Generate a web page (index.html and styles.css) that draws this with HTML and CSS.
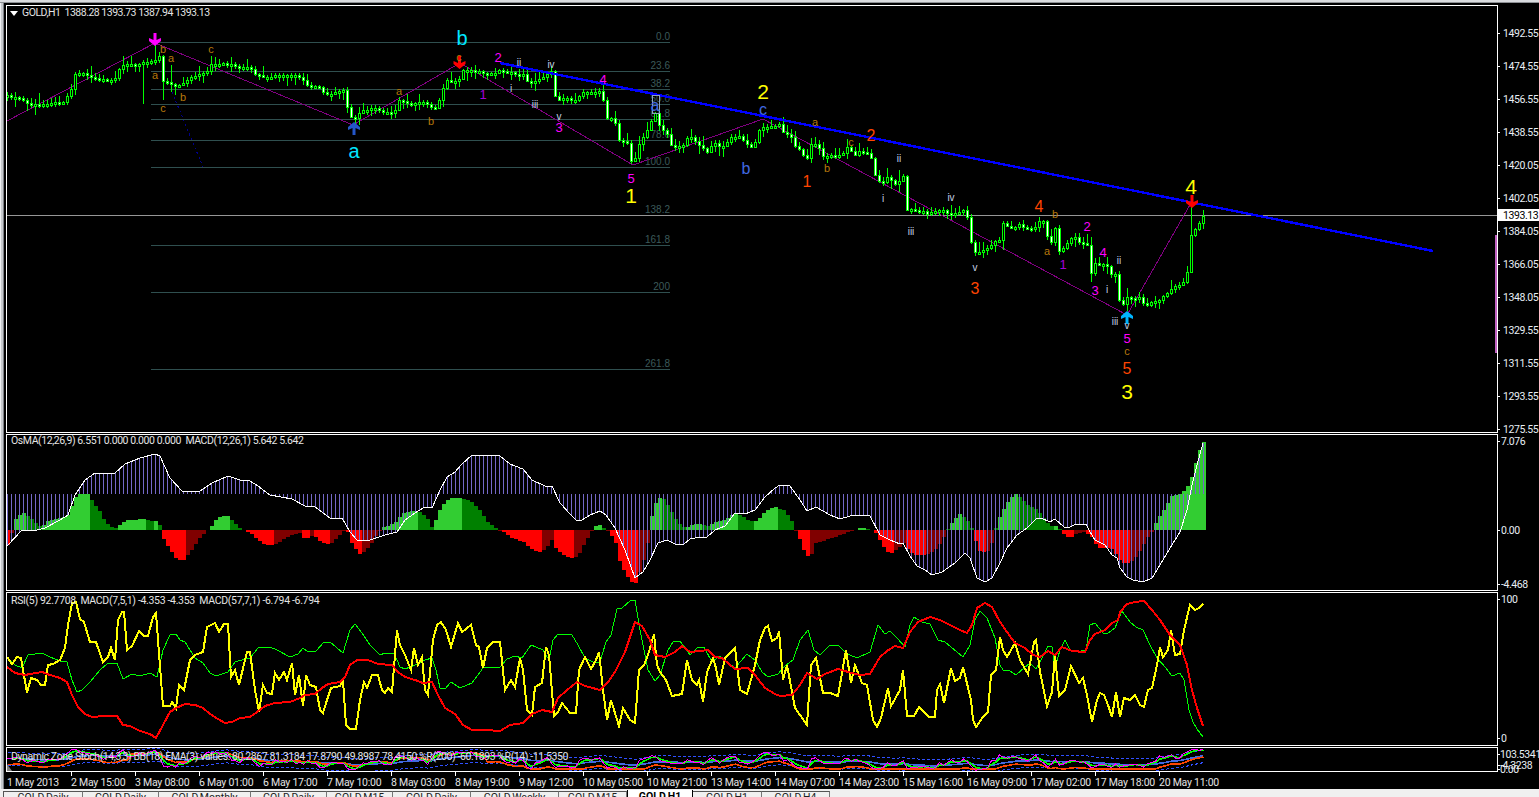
FILE: index.html
```html
<!DOCTYPE html>
<html lang="en">
<head>
    <meta charset="UTF-8">
    <title>GOLD,H1</title>
    <link rel="stylesheet" href="styles.css">
</head>
<body>

<div class="terminal">
    <div class="top-strip"></div>

    <div class="workspace">
        <div class="left-frame"></div>

        <div class="chart-window">
            <!-- Price chart -->
            <div class="pane pane-main">
                <div class="plot" id="plotMain">
                    <div class="legend legend-main"><i class="legend-arrow"></i>GOLD,H1&nbsp; 1388.28 1393.73 1387.94 1393.13</div>
                </div>
                <div class="scale" id="scaleMain"></div>
            </div>

            <!-- OsMA / MACD -->
            <div class="pane pane-osma">
                <div class="plot" id="plotOsma">
                    <div class="legend legend-osma">OsMA(12,26,9) 6.551 0.000 0.000 0.000&nbsp; MACD(12,26,1) 5.642 5.642</div>
                </div>
                <div class="scale" id="scaleOsma"></div>
            </div>

            <!-- RSI / two MACDs -->
            <div class="pane pane-rsi">
                <div class="plot" id="plotRsi">
                    <div class="legend legend-rsi">RSI(5) 92.7708&nbsp; MACD(7,5,1) -4.353 -4.353&nbsp; MACD(57,7,1) -6.794 -6.794</div>
                </div>
                <div class="scale" id="scaleRsi"></div>
            </div>

            <!-- Dynamic zone stochastic -->
            <div class="pane pane-stoch">
                <div class="plot" id="plotStoch">
                    <div class="legend legend-stoch">Dynamic Zone Stoch(14,3,3) BB(18) EMA(3) values: 80.2867 81.3184 17.8790 49.8987 78.4150 %R(200) -60.1893 %R(14) -11.5350</div>
                </div>
                <div class="scale" id="scaleStoch"></div>
            </div>

            <!-- Time axis -->
            <div class="time-axis">
                <span>1 May 2013</span>
                <span>2 May 15:00</span>
                <span>3 May 08:00</span>
                <span>6 May 01:00</span>
                <span>6 May 17:00</span>
                <span>7 May 10:00</span>
                <span>8 May 03:00</span>
                <span>8 May 19:00</span>
                <span>9 May 12:00</span>
                <span>10 May 05:00</span>
                <span>10 May 21:00</span>
                <span>13 May 14:00</span>
                <span>14 May 07:00</span>
                <span>14 May 23:00</span>
                <span>15 May 16:00</span>
                <span>16 May 09:00</span>
                <span>17 May 02:00</span>
                <span>17 May 18:00</span>
                <span>20 May 11:00</span>
            </div>
        </div>
    </div>

    <div class="tabs">
        <div class="tab">GOLD,Daily</div>
        <div class="tab">GOLD,Daily</div>
        <div class="tab">GOLD,Monthly</div>
        <div class="tab">GOLD,Daily</div>
        <div class="tab">GOLD,M15</div>
        <div class="tab">GOLD,Daily</div>
        <div class="tab">GOLD,Weekly</div>
        <div class="tab">GOLD,M15</div>
        <div class="tab active">GOLD,H1</div>
        <div class="tab">GOLD,H1</div>
        <div class="tab">GOLD,H4</div>
    </div>
</div>

<script src="chart.js"></script>
</body>
</html>
```

FILE: styles.css
```css
* {
    box-sizing: border-box;
}

body {
    margin: 0;
    padding: 0;
    background-color: #000;
    overflow: hidden;
    font-family: Roboto, "Liberation Sans", sans-serif;
}

.terminal {
    display: flex;
    flex-direction: column;
    height: 797px;
    width: 1539px;
    overflow: hidden;
    background-color: #000;
}

.top-strip {
    height: 3px;
    flex: none;
    background-color: #d9dbde;
    border-bottom: 1px solid #8d9094;
}

.workspace {
    display: flex;
    flex: 1;
    min-height: 0;
    padding-top: 2px;
}

.left-frame {
    width: 6px;
    flex: none;
    margin-top: -2px;
    background-color: #c4c7cb;
    border-left: 1px solid #eceef0;
    border-right: 2px solid #000;
    box-shadow: inset -1px 0 0 #7c7f84;
}

.chart-window {
    display: flex;
    flex-direction: column;
    flex: 1;
    gap: 1px;
}

/* Panes */
.pane {
    display: flex;
    flex: none;
}

.pane-main { height: 428px; }
.pane-osma { height: 157px; }
.pane-rsi { height: 154px; }
.pane-stoch { height: 25px; }

.plot {
    position: relative;
    width: 1492px;
    flex: none;
    overflow: hidden;
    border: 1px solid #fff;
}

.scale {
    flex: 1;
}

.plot svg, .scale svg {
    display: block;
    width: 100%;
    height: 100%;
}

.scale svg {
    overflow: visible;
}

.legend {
    position: absolute;
    line-height: 12px;
    font-size: 10.5px;
    letter-spacing: -0.42px;
    color: #e4e4e4;
    white-space: nowrap;
}

.legend-main { top: 1px; left: 15px; letter-spacing: -0.5px; }
.legend-osma { top: 0; left: 4px; }
.legend-rsi { top: 2px; left: 4px; letter-spacing: -0.33px; }
.legend-stoch { top: 3px; left: 4px; }

.legend-arrow {
    position: absolute;
    left: -12px;
    top: 4px;
    border-left: 4px solid transparent;
    border-right: 4px solid transparent;
    border-top: 5px solid #fff;
}

/* Time axis */
.time-axis {
    display: grid;
    grid-template-columns: repeat(19, 64px);
    flex: none;
    height: 16px;
    margin-top: -1px;
    padding-left: 1px;
    font-size: 10.5px;
    letter-spacing: -0.25px;
    color: #e4e4e4;
}

.time-axis span {
    position: relative;
    padding-top: 4px;
    white-space: nowrap;
}

.time-axis span::before {
    content: "";
    position: absolute;
    left: 0;
    top: 0;
    width: 1px;
    height: 4px;
    background-color: #fff;
}

.time-axis span:first-child::before {
    display: none;
}

/* Tabs, cut off by the bottom of the window */
.tabs {
    display: grid;
    grid-template-columns: 80px 76px 92px 76px 66px 78px 88px 68px 66px 69px 68px;
    flex: none;
    height: 8px;
    padding-left: 3px;
    padding-top: 2px;
    overflow: hidden;
    background-color: #f0f0f0;
}

.tab {
    height: 20px;
    padding-top: 0;
    line-height: 12px;
    text-align: center;
    font-size: 10.5px;
    color: #222;
    white-space: nowrap;
    border-top: 1px solid #555;
    border-right: 1px solid #777;
}

.tab:first-child {
    border-left: 1px solid #555;
}

.tab.active {
    margin-top: -1px;
    padding-top: 1px;
    background-color: #fff;
    font-weight: bold;
    color: #000;
    border-top: none;
    border-left: 1px solid #000;
    border-right: 1px solid #000;
}

/* Chart drawing */
.crisp {
    shape-rendering: crispEdges;
    fill: none;
}

.scale-text {
    font-family: Roboto, "Liberation Sans", sans-serif;
    font-size: 10.5px;
    letter-spacing: -0.4px;
    fill: #e8eef5;
    dominant-baseline: central;
}

.scale-text.tag {
    fill: #000;
}

.fib-text {
    font-family: "Liberation Sans", sans-serif;
    font-size: 10px;
    fill: #3c5a5a;
    text-anchor: end;
}

.wave {
    font-family: "Liberation Sans", sans-serif;
    text-anchor: middle;
    dominant-baseline: central;
}

.wave-major { font-size: 21px; fill: #ffff00; }
.wave-abc { font-size: 20px; fill: #00e6ff; }
.wave-intermediate { font-size: 16px; fill: #ff4500; }
.wave-blue { font-size: 16px; fill: #4169e1; }
.wave-minor { font-size: 13px; fill: #ff00ff; }
.wave-minor-dim { font-size: 13px; fill: #a400d8; }
.wave-sub { font-size: 11px; fill: #b8780b; }
.wave-roman { font-size: 10px; fill: #c4d2e6; }
```

FILE: chart.js
```js
// Everything below is in page pixels, the svg viewBox is set to the box of its container
const BAR_COUNT = 300;

function barX(i) {
    return 7.5 + 4 * i;
}

function rnd(i) {
    const v = Math.sin(i * 12.9898) * 43758.5453;
    return v - Math.floor(v);
}

// keys is a flat list: x, y, x, y ...
function lerp(keys, x) {
    if (x <= keys[0]) return keys[1];
    for (let k = 2; k < keys.length; k += 2) {
        if (x <= keys[k]) {
            const t = (x - keys[k - 2]) / (keys[k] - keys[k - 2]);
            return keys[k - 1] + t * (keys[k + 1] - keys[k - 1]);
        }
    }
    return keys[keys.length - 1];
}

function sample(keys) {
    const out = [];
    for (let i = 0; i < BAR_COUNT; i++) out.push(lerp(keys, barX(i)));
    return out;
}

function polyline(points, color, width, extra) {
    const p = points.join(' ');
    return `<polyline class="crisp" points="${p}" stroke="${color}" stroke-width="${width}" ${extra || ''}/>`;
}

function keysToPoints(keys) {
    const pts = [];
    for (let k = 0; k < keys.length; k += 2) pts.push(keys[k] + ',' + keys[k + 1]);
    return pts;
}

function mount(id, content) {
    const box = document.getElementById(id);
    const r = box.getBoundingClientRect();
    const left = r.left + box.clientLeft;
    const top = r.top + box.clientTop;
    const svg = `<svg viewBox="${left} ${top} ${box.clientWidth} ${box.clientHeight}">${content}</svg>`;
    box.insertAdjacentHTML('afterbegin', svg);
}

function scaleLabels(list, textX) {
    let s = '';
    list.forEach(function(item) {
        s += `<rect x="1498" y="${item[0]}" width="2" height="1" fill="#fff"/>`;
        s += `<text class="scale-text" x="${textX}" y="${item[0]}">${item[1]}</text>`;
    });
    return s;
}

/* ---------- price chart ---------- */
const closeKeys = [8,96,20,98,28,103,40,105,50,103,65,101,72,87,76,72,82,73,90,76,100,80,115,80,120,68,127,63,135,65,145,62,155,60,159,53,163,80,168,82,175,85,180,85,190,78,207,72,212,64,230,63,237,68,250,68,257,75,265,78,280,75,295,75,303,80,310,88,318,85,322,92,330,95,344,90,348,110,352,118,356,118,362,110,375,108,385,112,395,112,400,100,410,104,425,102,430,105,434,110,438,105,442,90,447,80,455,82,460,80,463,70,470,70,480,71,487,74,500,71,510,72,515,74,525,75,528,82,540,80,548,73,553,71,556,100,565,98,575,100,580,95,585,92,600,91,603,98,607,117,615,120,616,127,619,140,628,142,632,163,637,156,640,142,645,135,650,123,656,113,660,127,668,135,672,146,683,146,690,135,700,145,707,152,715,143,723,147,730,138,740,135,745,143,752,147,757,140,760,128,765,127,780,125,785,134,790,134,795,145,800,150,807,160,812,143,818,145,823,155,830,156,843,154,848,147,855,155,860,150,870,154,873,161,876,178,885,183,888,175,895,185,900,180,904,176,907,210,915,210,922,210,927,214,935,211,945,210,950,215,965,210,968,218,972,245,976,253,980,252,985,250,990,247,995,240,1000,240,1003,222,1010,228,1015,227,1020,225,1028,227,1030,229,1035,228,1038,222,1043,220,1047,233,1048,238,1052,243,1056,226,1059,250,1063,248,1068,243,1072,238,1076,237,1080,242,1084,243,1088,246,1091,275,1096,262,1100,265,1104,264,1108,266,1111,274,1115,275,1117,270,1120,306,1123,305,1127,297,1131,298,1135,300,1139,297,1143,303,1147,305,1151,302,1160,300,1167,293,1175,285,1181,285,1187,277,1189,260,1192,229,1195,231,1199,224,1203,215];

const longWicks = { 155: [44, 60], 163: [65, 100], 171: [65, 92], 143: [93, 104], 899: [170, 192], 1191: [200, 262], 1127: [288, 311] };

function drawCandles() {
    const closes = sample(closeKeys);
    let s = '';
    let prev = closes[0];
    closes.forEach(function(raw, i) {
        const close = Math.round(raw + (rnd(i) - 0.5) * 1.6);
        const open = Math.round(prev);
        const top = Math.min(open, close);
        const h = Math.max(Math.abs(open - close), 2);
        const bottom = top + h;
        let hi = top - 1 - Math.round(rnd(i + 500) * rnd(i + 900) * 10);
        let lo = bottom + 1 + Math.round(rnd(i + 1300) * rnd(i + 1700) * 10);
        const x = barX(i);
        Object.keys(longWicks).forEach(function(k) {
            if (Math.abs(k - x) <= 2) {
                hi = Math.min(hi, longWicks[k][0]);
                lo = Math.max(lo, longWicks[k][1]);
            }
        });
        s += `<line class="crisp" x1="${x}" x2="${x}" y1="${hi}" y2="${lo}" stroke="#00ff00"/>`;
        const fill = close > open ? '#fff' : '#000';
        s += `<rect class="crisp" style="fill:${fill}" x="${x - 1}" y="${top + 0.5}" width="2" height="${h}" stroke="#00ff00"/>`;
        prev = close;
    });
    return s;
}

function arrow(x, y, color, up) {
    const flip = up ? -1 : 1;
    const d = 'M-1.5 -12H1.5V-5L6 -7V-4L0 1L-6 -4V-7L-1.5 -5Z';
    return `<path d="${d}" fill="${color}" transform="translate(${x} ${y}) scale(1 ${flip})"/>`;
}

function drawMain() {
    const fib = [[42, '0.0'], [71, '23.6'], [89, '38.2'], [104, '50.0'], [119, '61.8'], [140, '78.6'], [167, '100.0'], [215, '138.2'], [245, '161.8'], [292, '200'], [369, '261.8']];
    let s = '';
    fib.forEach(function(f) {
        s += `<line class="crisp" x1="151" x2="670" y1="${f[0] + 0.5}" y2="${f[0] + 0.5}" stroke="#2f4f4f"/>`;
        s += `<text class="fib-text" x="670" y="${f[0] - 2}">${f[1]}</text>`;
    });

    s += `<line class="crisp" x1="7" x2="1497" y1="215.5" y2="215.5" stroke="#969696"/>`;
    s += polyline(['7,121', '155,43', '353,125', '460,63', '633,165', '763,119', '1127,315', '1191,203'], '#800080', 1);
    s += polyline(['172,92', '203,167'], '#00008b', 1, 'stroke-dasharray="2 3"');
    s += drawCandles();
    s += polyline(['500,63', '1433,251'], '#0000ff', 2.4);
    s += `<rect class="crisp" x="652.5" y="95.5" width="7" height="18" stroke="#8fa3c0"/>`;
    s += `<rect x="1495" y="235" width="2" height="118" fill="#c060c0"/>`;

    s += arrow(155, 45, '#ff00ff', false);
    s += arrow(459.5, 68, '#ff0000', false);
    s += arrow(354, 123, '#2456c8', true);
    s += arrow(1127, 312, '#00b4ff', true);
    s += arrow(1192, 207, '#ff0000', false);

    const waves = [
        ['major', 763, 91, '2'], ['major', 631, 195, '1'], ['major', 1191, 186, '4'], ['major', 1127, 391, '3'],
        ['abc', 462, 38, 'b'], ['abc', 354, 151, 'a'],
        ['intermediate', 807, 181, '1'], ['intermediate', 871, 135, '2'], ['intermediate', 975, 288, '3'], ['intermediate', 1039, 206, '4'], ['intermediate', 1127, 368, '5'],
        ['blue', 746, 168, 'b'], ['blue', 763, 109, 'c'], ['blue', 655, 105, 'a'],
        ['minor', 498, 57, '2'], ['minor', 559, 127, '3'], ['minor', 603, 79, '4'], ['minor', 631, 178, '5'], ['minor', 1087, 226, '2'], ['minor', 1103, 252, '4'], ['minor', 1095, 290, '3'], ['minor', 1127, 338, '5'],
        ['minor-dim', 483, 94, '1'], ['minor-dim', 1063, 264, '1'],
        ['sub', 163, 49, 'b'], ['sub', 155, 75, 'a'], ['sub', 163, 108, 'c'], ['sub', 171, 58, 'a'], ['sub', 183, 97, 'b'], ['sub', 211, 49, 'c'], ['sub', 399, 91, 'a'], ['sub', 431, 121, 'b'], ['sub', 459, 57, 'c'], ['sub', 815, 122, 'a'], ['sub', 827, 168, 'b'], ['sub', 851, 142, 'c'], ['sub', 1047, 251, 'a'], ['sub', 1055, 214, 'b'], ['sub', 1127, 351, 'c'],
        ['roman', 519, 62, 'ii'], ['roman', 551, 64, 'iv'], ['roman', 511, 88, 'i'], ['roman', 535, 104, 'iii'], ['roman', 559, 116, 'v'], ['roman', 899, 158, 'ii'], ['roman', 951, 197, 'iv'], ['roman', 883, 198, 'i'], ['roman', 911, 231, 'iii'], ['roman', 975, 267, 'v'], ['roman', 1119, 260, 'ii'], ['roman', 1107, 289, 'i'], ['roman', 1115, 321, 'iii'], ['roman', 1127, 325, 'v']
    ];
    waves.forEach(function(w) {
        s += `<text class="wave wave-${w[0]}" x="${w[1]}" y="${w[2]}">${w[3]}</text>`;
    });
    mount('plotMain', s);

    const prices = ['1492.55', '1474.55', '1456.55', '1438.55', '1420.05', '1402.05', '1384.05', '1366.05', '1348.05', '1329.55', '1311.55', '1293.55', '1275.55'];
    let scale = scaleLabels(prices.map(function(p, i) { return [33 + 33 * i, p]; }), 1503);
    scale += `<rect x="1498" y="209" width="41" height="12" fill="#fff"/>`;
    scale += `<text class="scale-text tag" x="1503" y="215">1393.13</text>`;
    mount('scaleMain', scale);
}

/* ---------- OsMA ---------- */
const macdKeys = [7,546,22,530,37,530,45,528,60,520,68,515,75,495,85,480,95,473,115,473,125,464,140,458,155,454,160,456,170,478,183,492,200,491,212,483,228,476,240,480,250,481,258,486,270,495,292,499,305,506,315,507,330,518,342,518,350,532,357,540,370,540,385,535,397,532,405,520,418,511,425,507,432,508,440,490,447,477,455,472,462,464,472,455,482,455,500,456,510,464,523,469,532,480,545,486,552,486,560,503,570,514,576,520,582,520,590,515,600,511,606,515,615,528,625,550,635,578,643,572,650,560,658,543,667,540,675,544,683,545,690,539,700,537,707,537,715,530,725,526,735,513,745,514,755,510,765,497,775,488,780,485,790,486,800,500,807,511,816,507,830,515,840,519,850,516,860,515,870,516,880,535,890,540,900,544,903,543,910,556,917,566,925,570,932,575,942,572,955,563,965,553,970,558,977,578,985,582,992,578,1000,563,1007,548,1017,535,1027,528,1036,519,1041,518,1050,522,1055,519,1064,527,1070,527,1076,524,1086,524,1090,532,1095,540,1105,545,1112,555,1117,558,1120,568,1127,577,1133,580,1143,582,1152,578,1160,565,1170,548,1180,532,1187,510,1192,485,1197,465,1203,443];

const histKeys = [7,546,10,540,12,530,14,520,22,512,30,518,37,524,42,527,45,522,60,518,68,515,72,505,77,494,88,494,95,505,100,512,105,522,112,527,117,529,120,524,128,520,145,519,150,521,155,520,160,525,161,530,162,536,170,550,175,558,183,561,190,552,198,540,205,532,207,530,210,528,218,517,228,516,235,523,240,529,243,530,250,533,256,538,262,543,270,546,278,543,290,535,300,533,303,538,308,538,310,536,316,537,322,543,330,544,338,536,345,530,347,530,350,541,355,548,360,555,368,548,375,537,380,530,383,527,395,523,400,516,405,512,415,511,422,513,428,520,433,530,436,518,442,505,450,498,460,498,470,500,480,510,488,523,495,527,498,530,505,533,512,538,520,541,525,543,530,548,535,551,540,552,545,549,550,542,552,539,554,546,560,553,565,556,572,558,577,557,581,550,586,540,590,534,592,530,594,527,597,524,602,525,605,530,607,530,610,534,615,541,618,550,620,564,625,572,630,582,636,583,640,570,645,556,648,540,649,530,650,522,654,505,660,497,665,500,670,510,675,518,680,525,685,528,690,525,700,524,705,526,710,525,715,522,725,520,735,513,740,515,745,518,750,521,755,521,760,518,765,511,775,507,785,511,790,518,793,523,795,530,798,535,802,545,806,557,812,554,815,543,820,542,825,540,835,537,845,533,853,531,860,528,870,529,873,530,877,535,882,544,886,552,892,553,900,547,903,542,908,550,915,555,925,555,935,550,942,540,945,533,948,528,955,518,960,513,967,520,972,529,973,530,975,540,980,552,988,551,993,540,995,530,997,522,1003,510,1010,498,1015,494,1020,497,1027,505,1037,510,1045,520,1050,526,1057,526,1060,530,1062,532,1066,536,1070,538,1075,534,1085,532,1090,535,1095,543,1100,549,1110,547,1116,555,1122,563,1130,563,1137,555,1143,545,1150,533,1153,530,1155,524,1160,515,1165,508,1172,495,1178,495,1185,490,1190,482,1195,465,1197,455,1200,449,1203,442];

function drawOsma() {
    const zero = 530;
    const baseline = 494;
    const hist = sample(histKeys).map(Math.round);
    const macd = sample(macdKeys);
    let s = '';
    hist.forEach(function(y, i) {
        if (y === zero) return;
        const grows = Math.abs(y - zero) >= Math.abs((i ? hist[i - 1] : zero) - zero);
        let color;
        if (y < zero) color = grows ? '#32cd32' : '#008000';
        else color = grows ? '#ff0000' : '#800000';
        s += `<rect class="crisp" style="fill:${color}" x="${barX(i) - 2}" y="${Math.min(y, zero)}" width="4" height="${Math.abs(y - zero)}"/>`;
    });
    macd.forEach(function(y, i) {
        s += `<line class="crisp" x1="${barX(i)}" x2="${barX(i)}" y1="${baseline}" y2="${Math.round(y)}" stroke="#7468c8"/>`;
    });
    s += polyline(keysToPoints(macdKeys), '#fff', 1);
    mount('plotOsma', s);
    mount('scaleOsma', scaleLabels([[441, '7.076'], [530, '0.00'], [584, '-4.468']], 1501));
}

/* ---------- RSI ---------- */
const yellowKeys = [7,657,12,664,17,657,21,658,27,693,31,678,37,680,41,685,45,685,48,665,53,664,60,660,65,648,68,625,72,603,76,602,80,619,84,622,90,642,96,642,103,662,108,657,111,648,115,660,118,620,122,612,124,612,127,650,132,646,139,631,144,636,148,636,153,617,156,613,158,640,163,706,170,706,172,702,176,708,179,685,184,690,190,660,195,655,203,652,207,627,215,623,219,632,224,624,228,624,231,677,235,670,239,685,247,652,250,652,255,690,259,712,263,685,267,693,272,694,275,673,279,680,284,672,287,680,290,670,292,663,295,695,299,675,303,706,306,675,310,685,316,687,320,710,323,713,327,700,331,688,340,686,343,680,346,725,350,729,356,729,360,700,364,682,367,688,372,675,378,675,382,690,385,693,388,688,392,692,397,630,400,645,405,655,411,670,414,648,418,665,422,657,425,690,428,695,433,640,437,625,441,622,446,630,451,647,458,623,462,632,471,625,476,645,479,647,483,668,487,648,493,642,500,642,505,690,511,680,515,687,520,658,523,670,527,710,532,715,535,687,542,683,546,647,549,655,554,716,558,712,562,703,570,713,576,713,579,670,585,657,591,669,596,660,599,652,603,690,607,720,611,700,619,726,623,708,630,720,635,723,639,670,644,665,648,655,654,634,657,665,660,672,666,680,672,696,682,694,687,660,692,680,697,685,699,680,703,702,707,672,713,658,716,668,719,685,725,658,735,648,740,690,747,694,755,665,760,640,765,628,768,626,772,641,777,638,779,631,783,680,787,665,795,708,800,715,807,725,811,665,816,658,823,693,830,693,838,696,846,650,851,683,855,665,862,683,867,685,873,720,877,727,881,718,888,688,891,706,900,690,903,670,907,716,914,716,919,707,929,717,935,717,937,690,940,684,944,703,951,668,955,681,960,678,963,667,971,700,973,720,976,727,983,717,988,712,991,675,996,670,1000,637,1003,650,1007,657,1015,643,1020,660,1028,674,1034,642,1036,640,1040,672,1047,706,1052,692,1055,655,1059,696,1065,690,1071,666,1079,683,1083,678,1087,695,1092,722,1097,700,1100,693,1104,695,1108,705,1112,717,1116,692,1120,717,1124,698,1130,700,1135,695,1140,705,1144,707,1148,690,1152,688,1157,665,1160,647,1163,657,1168,650,1171,630,1175,655,1180,654,1184,630,1190,605,1195,610,1199,608,1203,604];

const greenKeys = [7,657,15,665,22,668,28,655,42,653,50,657,60,661,67,662,72,680,77,692,82,690,90,682,100,670,107,664,117,663,123,679,132,674,140,676,150,673,157,677,163,650,170,635,176,634,180,640,185,642,195,658,203,663,210,673,216,676,228,672,235,662,245,659,250,658,258,648,262,647,270,647,277,650,290,657,298,654,303,648,307,651,316,651,324,642,330,642,343,653,350,630,355,624,362,633,370,645,380,655,385,653,394,653,400,667,405,669,415,665,425,660,432,658,436,670,440,688,445,689,451,682,460,688,472,683,483,668,500,667,507,659,515,656,522,658,531,645,543,650,549,660,553,640,558,634,572,635,578,645,585,658,593,662,600,662,606,642,611,635,617,609,622,608,630,601,635,600,640,630,648,670,655,681,660,675,668,650,673,642,680,641,690,655,697,648,704,647,712,662,720,656,735,668,747,654,755,660,762,672,768,677,778,674,785,666,793,660,800,640,808,630,814,650,820,655,830,645,838,645,845,652,850,655,857,658,870,652,878,625,885,634,890,631,897,638,905,647,910,625,914,617,922,622,930,624,938,640,945,642,957,652,963,657,970,645,975,620,980,611,987,618,995,638,1000,665,1003,670,1010,671,1016,675,1024,668,1030,663,1036,669,1041,660,1048,646,1052,647,1055,668,1060,650,1065,640,1070,650,1076,652,1086,650,1090,625,1095,623,1103,633,1108,633,1115,628,1122,611,1130,622,1136,627,1143,630,1150,645,1157,658,1166,668,1172,676,1180,673,1184,680,1189,710,1193,722,1197,729,1203,737];

const redKeys = [7,667,15,673,25,675,30,674,42,672,50,675,60,678,67,682,72,695,78,707,85,714,92,717,105,716,117,716,123,725,130,726,140,731,150,734,156,738,163,725,170,712,176,708,185,704,195,705,203,708,210,714,218,719,225,723,232,722,240,718,250,717,257,712,265,706,275,703,290,702,300,698,305,695,315,694,322,688,328,684,340,682,345,677,350,665,357,660,368,660,378,664,392,665,398,672,405,677,415,680,423,683,432,682,438,695,445,708,455,714,463,725,472,730,485,730,500,731,510,725,523,723,532,714,542,710,552,712,558,698,567,690,577,682,585,686,600,690,608,682,615,672,625,652,635,622,642,626,650,640,655,655,665,657,675,652,682,646,690,652,700,651,708,650,715,657,722,658,735,669,748,668,755,675,765,688,775,694,780,696,792,695,800,685,807,673,817,679,825,674,838,669,848,672,860,675,870,674,880,657,887,651,895,646,903,648,910,632,918,622,930,617,940,620,950,625,960,630,967,633,972,625,977,608,985,603,992,607,1000,622,1007,632,1015,643,1025,648,1033,655,1040,657,1048,651,1055,655,1062,647,1072,651,1085,652,1090,640,1095,634,1105,630,1112,623,1118,620,1120,612,1127,604,1135,602,1144,601,1152,610,1160,620,1170,635,1180,645,1187,665,1192,690,1197,708,1203,726];

function drawRsi() {
    let s = '';
    s += polyline(keysToPoints(greenKeys), '#00ff00', 1);
    s += polyline(keysToPoints(yellowKeys), '#ffff00', 2);
    s += polyline(keysToPoints(redKeys), '#ff0000', 2);
    mount('plotRsi', s);
    mount('scaleRsi', scaleLabels([[599, '100'], [738, '0']], 1501));
}

/* ---------- Dynamic zone stochastic, its lines follow the RSI ---------- */
function ema(values, n) {
    const out = [];
    const k = 2 / (n + 1);
    values.forEach(function(v, i) {
        out.push(i ? out[i - 1] + k * (v - out[i - 1]) : v);
    });
    return out;
}

function drawStoch() {
    const yellow = sample(yellowKeys);
    const magenta = yellow.map(function(y, i) {
        return 749 + (y - 604) / 125 * 21 + (rnd(i + 77) - 0.5) * 2;
    });
    const green = ema(magenta, 3);
    const mid = ema(magenta, 18);
    const orange = ema(magenta, 6).map(function(y, i) {
        return Math.min(769, y + 6 - (i > 30 && i < 120 ? 7 : 0));
    });
    const toPts = function(arr, shift) {
        return arr.map(function(y, i) {
            return barX(i) + ',' + (y + (shift || 0)).toFixed(1);
        });
    };
    let s = '';
    s += polyline(toPts(mid, -6), '#3050ff', 1, 'stroke-dasharray="3 2"');
    s += polyline(toPts(mid, 7), '#3050ff', 1, 'stroke-dasharray="3 2"');
    s += polyline(toPts(mid), '#4169e1', 1.6);
    s += polyline(toPts(orange), '#ff4500', 1.6);
    s += polyline(toPts(green), '#00ff00', 1.6);
    s += polyline(toPts(magenta), '#ff00ff', 1);
    s += `<polygon points="7,771 7,764 12,771" fill="#808080"/>`;
    mount('plotStoch', s);
    mount('scaleStoch', scaleLabels([[754, '103.5341'], [765, '-4.3238'], [769, '0.00']], 1500));
}

drawMain();
drawOsma();
drawRsi();
drawStoch();
```
